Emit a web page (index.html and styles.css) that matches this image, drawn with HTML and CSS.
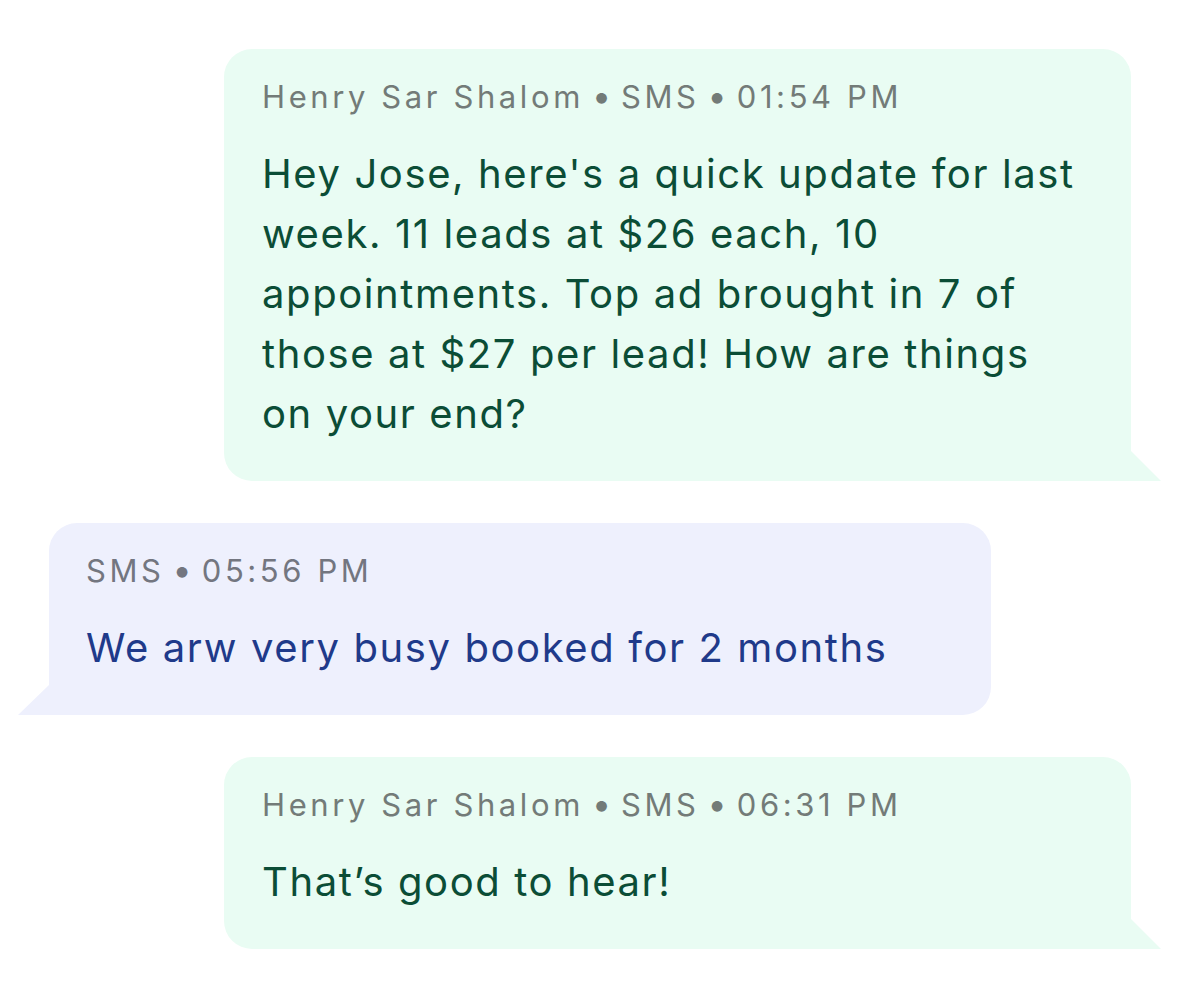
FILE: index.html
```html
<!DOCTYPE html>
<html>
<head>
<meta charset="utf-8">
<link rel="stylesheet" href="styles.css">
</head>
<body>
<div class="thread">
  <div class="bubble out">
    <div class="meta">Henry Sar Shalom<span class="dot">•</span>SMS<span class="dot">•</span>01:54 PM</div>
    <div class="text">Hey Jose, here's a quick update for last week. 11 leads at $26 each, 10 appointments. Top ad brought in 7 of those at $27 per lead! How are things on your end?</div>
  </div>
  <div class="bubble in">
    <div class="meta">SMS<span class="dot">•</span>05:56 PM</div>
    <div class="text">We arw very busy booked for 2 months</div>
  </div>
  <div class="bubble out">
    <div class="meta">Henry Sar Shalom<span class="dot">•</span>SMS<span class="dot">•</span>06:31 PM</div>
    <div class="text">That’s good to hear!</div>
  </div>
</div>
</body>
</html>
```

FILE: styles.css
```css
html, body {
  margin: 0;
  padding: 0;
  background: #ffffff;
}
body {
  font-family: Inter, "Noto Sans", sans-serif;
}
.thread {
  display: flex;
  flex-direction: column;
  gap: 42px;
  padding-top: 49px;
}
.bubble {
  position: relative;
  box-sizing: border-box;
  border-radius: 28px;
  padding: 26px 38px 37px 38px;
}
.bubble.out {
  background: #e9fcf3;
  margin-left: 224px;
  width: 907px;
  border-bottom-right-radius: 0;
}
.bubble.in {
  background: #eef0fd;
  margin-left: 49px;
  width: 942px;
  border-bottom-left-radius: 0;
  padding-left: 37px;
}
.bubble.out::after,
.bubble.in::after {
  content: "";
  position: absolute;
  bottom: 0;
  width: 30px;
  height: 30px;
}
.bubble.out::after {
  right: -30px;
  background: #e9fcf3;
  clip-path: polygon(0 0, 100% 100%, 0 100%);
}
.bubble.in::after {
  left: -31px;
  width: 31px;
  background: #eef0fd;
  clip-path: polygon(100% 0, 100% 100%, 0 100%);
}
.meta {
  font-size: 31px;
  line-height: 44px;
  color: #737b78;
  letter-spacing: 3.6px;
}
.in .meta {
  color: #737680;
}
.dot {
  letter-spacing: 0;
  font-size: 34px;
  line-height: 0;
  margin: 0 10px 0 8px;
}
.text {
  margin-top: 25px;
  font-size: 40px;
  line-height: 60px;
  letter-spacing: 1.6px;
  color: #0b4d36;
}
.in .text {
  color: #1f3a8a;
}
```
